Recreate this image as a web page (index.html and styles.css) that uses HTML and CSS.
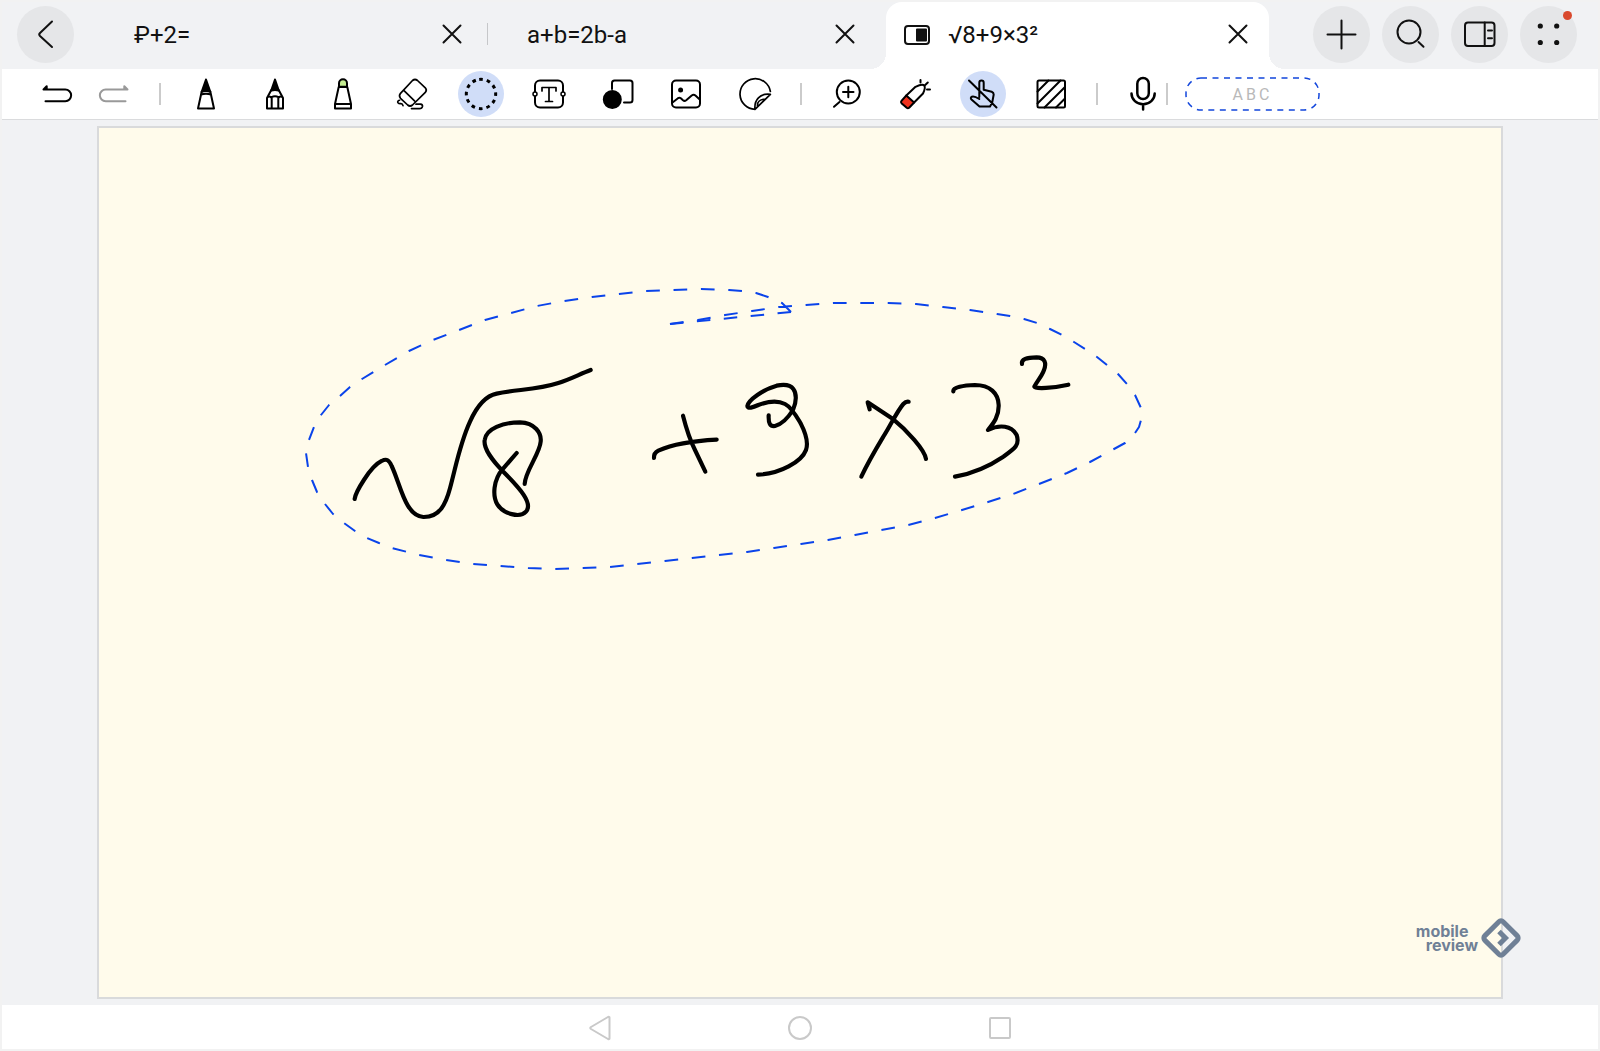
FILE: index.html
```html
<!DOCTYPE html>
<html lang="en">
<head>
<meta charset="utf-8">
<meta name="viewport" content="width=device-width, initial-scale=1">
<title>√8+9×3²</title>
<link rel="stylesheet" href="styles.css">
</head>
<body>
<div class="app">
  <header class="topbar">
    <button class="round-btn" type="button" aria-label="Back">
      <svg viewBox="0 0 57 57"><path d="M35 15.500L23 27q-1.500 1.500 0 3L35 41"/></svg>
    </button>
    <nav class="tabs" aria-label="Open notes">
      <div class="tab tab-divided">
        <button class="tab-title" type="button">₽+2=</button>
        <button class="tab-close" type="button" aria-label="Close ₽+2="><svg viewBox="0 0 32 32"><path d="M7.500 7.500l17 17M24.500 7.500l-17 17"/></svg></button>
      </div>
      <div class="tab">
        <button class="tab-title" type="button">a+b=2b-a</button>
        <button class="tab-close" type="button" aria-label="Close a+b=2b-a"><svg viewBox="0 0 32 32"><path d="M7.500 7.500l17 17M24.500 7.500l-17 17"/></svg></button>
      </div>
      <div class="tab tab-active">
        <button class="tab-title" type="button" aria-current="page">
          <svg class="split-icon" viewBox="0 0 26 20"><rect x="1" y="1" width="24" height="18" rx="3"/><rect class="solid" x="13" y="4.500" width="9" height="11"/></svg>
          <span>√8+9×3²</span>
        </button>
        <button class="tab-close" type="button" aria-label="Close √8+9×3²"><svg viewBox="0 0 32 32"><path d="M7.500 7.500l17 17M24.500 7.500l-17 17"/></svg></button>
      </div>
    </nav>
    <div class="actions">
      <button class="round-btn" type="button" aria-label="New note"><svg viewBox="0 0 57 57"><path d="M14.500 28.500h28M28.500 14.500v28"/></svg></button>
      <button class="round-btn" type="button" aria-label="Search"><svg viewBox="0 0 57 57"><circle cx="27" cy="26" r="11.500"/><path d="M36.500 36l5 4.700"/></svg></button>
      <button class="round-btn" type="button" aria-label="Side panel"><svg viewBox="0 0 57 57"><rect x="14" y="16.500" width="29.500" height="23.500" rx="3"/><path d="M33.700 16.500v23.500M37 24.500h4M37 32.300h4"/></svg></button>
      <button class="round-btn" type="button" aria-label="More">
        <svg viewBox="0 0 57 57"><g class="solid"><circle cx="20.300" cy="20" r="1.600"/><circle cx="36.700" cy="20" r="1.600"/><circle cx="20.300" cy="36.500" r="1.600"/><circle cx="36.700" cy="36.500" r="1.600"/></g></svg>
        <span class="badge"></span>
      </button>
    </div>
  </header>

  <div class="toolbar" role="toolbar" aria-label="Drawing tools">
    <div class="history">
      <button class="tool" type="button" aria-label="Undo"><svg viewBox="0 0 46 46"><path d="M12.700 15.200v3.300H9.500zM9.500 18.500h21.800a5.800 5.800 0 0 1 0 11.700H11.500"/></svg></button>
      <button class="tool tool-disabled" type="button" aria-label="Redo" disabled><svg viewBox="0 0 46 46"><path d="M33.300 15.200v3.300H36.500zM36.500 18.500H14.700a5.800 5.800 0 0 0 0 11.700H34.500"/></svg></button>
    </div>
    <span class="rule"></span>
    <div class="pens">
      <button class="tool" type="button" aria-label="Pen"><svg viewBox="0 0 46 46"><path class="solid" d="M23 8.500l-4.300 12.300q4.300-1.400 8.600 0z"/><path d="M18.700 20.500L15 37.500h16l-3.700-17M18 23.500q5-1.700 10 0"/></svg></button>
      <button class="tool" type="button" aria-label="Pencil"><svg viewBox="0 0 46 46"><path class="solid" d="M23 8.500l-3.800 11q3.800-1.200 7.600 0z"/><path d="M19.300 19L15 27v10.500h16V27l-4.300-8M15 27q2-2.500 4.200-.5 3.800-2.500 7.600 0Q29 24.500 31 27M19.700 27v10M26.300 27v10"/></svg></button>
      <button class="tool" type="button" aria-label="Highlighter"><svg viewBox="0 0 46 46"><path class="lime" d="M19 15.700v-3.400a4 4 0 0 1 8 0v3.400z"/><path d="M18.700 16h8.600L31 33v4.500H15V33zM15 33h16"/></svg></button>
      <button class="tool" type="button" aria-label="Eraser"><svg viewBox="0 0 46 46"><g class="fine"><path d="M23.500 9.500q2.500-2 5 0l7.800 7.300q2 2.300 0 4.600L23.500 34q-2.500 2-4.800 0l-7.200-6.700q-2-2.500 0-5zM14.500 19.200l11 10.600"/><path d="M10.500 29.300q-2.500.8-1.500 2.500 1 1.200 3 .8 1.500 0 2 2M27 33.200h4.500q2.200.3 2 2.200-.5 2.200-3 2.200H22.500"/></g></svg></button>
      <button class="tool tool-on" type="button" aria-label="Lasso" aria-pressed="true"><svg viewBox="0 0 46 46"><circle class="dots" cx="23" cy="23" r="14.700" transform="rotate(-97 23 23)"/></svg></button>
      <button class="tool" type="button" aria-label="Text"><svg viewBox="0 0 46 46"><rect x="9" y="9.500" width="28" height="27" rx="5"/><circle class="hole" cx="9" cy="23" r="2"/><circle class="hole" cx="37" cy="23" r="2"/><path class="fine" d="M16 20v-3.500h14V20M23 16.500v14M19.500 30.500h7"/></svg></button>
      <button class="tool" type="button" aria-label="Shapes"><svg viewBox="0 0 46 46"><path d="M17 18v-6a2.500 2.500 0 0 1 2.500-2.500H35a2.500 2.500 0 0 1 2.500 2.500v17a2.500 2.500 0 0 1-2.500 2.500h-6"/><circle class="solid" cx="17.300" cy="28.500" r="8.500"/></svg></button>
      <button class="tool" type="button" aria-label="Image"><svg viewBox="0 0 46 46"><rect x="9" y="9.500" width="28" height="27" rx="4"/><circle class="solid" cx="17.600" cy="19" r="1.500"/><path d="M9.500 31.500l5.500-4.300q1.500-1 2.800 0l2.200 2q1.500 1.300 3.200 0l5.500-4.700q2-1.500 4 .2l4.300 4"/></svg></button>
      <button class="tool" type="button" aria-label="Sticker"><svg viewBox="0 0 46 46"><g class="fine"><path d="M23 38.300A15.300 15.300 0 1 1 38.400 20.500M38.400 23.300L23 38.300C22 29 28 22 38.400 23.300zM25.500 35.500C25 30 28 28.500 33.500 28"/></g></svg></button>
    </div>
    <span class="rule"></span>
    <div class="helpers">
      <button class="tool" type="button" aria-label="Zoom in"><svg viewBox="0 0 46 46"><circle cx="24.300" cy="21" r="11.500"/><path d="M15.500 31l-5.500 4.800M24.300 15.800v10.400M19 21h10.500"/></svg></button>
      <button class="tool" type="button" aria-label="Laser pointer"><svg viewBox="0 0 46 46"><path class="red" d="M14.300 24.500l7.800 7-5 5.300q-1.200 1-2.400 0l-5.200-4.600q-1-1.200 0-2.400z"/><path d="M14.300 24.500l9.200-8.700q7-3.300 8.800-1.200 1.500 2-1.300 7.900l-8.900 9M28.500 9v2.500M33.200 14l2.600-2.500M35 18.500h3"/></svg></button>
      <button class="tool tool-on" type="button" aria-label="Disable finger drawing" aria-pressed="true"><svg viewBox="0 0 46 46"><path d="M19.300 26V11.700a2.200 2.200 0 0 1 4.400 0v7l8 2q2 .8 2 2.800l-1.500 8-2.200 4H19.500l-8.300-7.300q-1-1.700.7-2.500 2.500-.8 7.400 2.300M9 9.500l27.500 27"/></svg></button>
      <button class="tool" type="button" aria-label="Pattern"><svg viewBox="0 0 46 46"><rect x="9.500" y="9.500" width="27.500" height="27" rx="1.500"/><path d="M9.500 20.500l11-11M9.500 32.500l23-23M16.500 36.500L37 16M28 36.500l9-9"/></svg></button>
    </div>
    <span class="rule"></span>
    <button class="tool tool-mic" type="button" aria-label="Record"><svg viewBox="0 0 46 46"><rect x="17.300" y="7" width="11.500" height="21" rx="5.700"/><path d="M11.500 22.500a11.600 10.800 0 0 0 23.200 0M23.100 33.500v5"/></svg></button>
    <span class="rule rule-tight"></span>
    <button class="lasso-style" type="button">
      <svg viewBox="0 0 135 34" preserveAspectRatio="none"><rect x="1" y="1" width="133" height="32" rx="15"/></svg>
      <span>ABC</span>
    </button>
  </div>

  <main class="workspace">
    <div class="paper">
      <svg class="ink" viewBox="99 128 1402 869" role="img" aria-label="Handwritten √8 + 9 × 3², circled with the lasso">
        <polyline class="lasso" pathLength="145" points="670,324 698,320 725,315 752,311 779,307 806,305 834,303 861,303 888,303 916,304 943,307 970,310 997,314 1010,316 1024,319 1037,323 1050,329 1062,335 1074,342 1085,349 1097,357 1107,365 1118,374 1127,384 1135,395 1141,408 1142,414 1141,420 1139,427 1135,433 1125,443 1114,449 1090,462 1067,473 1039,484 1013,494 988,502 962,510 935,518 908,525 881,530 855,535 828,540 801,544 774,548 747,552 719,555 692,558 665,561 637,564 610,567 583,568 555,569 528,568 500,566 473,564 446,560 419,555 392,548 379,543 367,538 355,531 344,523 333,514 325,504 317,492 312,480 308,467 306,453 309,440 314,427 321,415 329,405 340,396 350,387 362,379 385,365 409,351 433,340 459,330 485,320 511,313 537,306 564,301 592,297 619,294 646,291 673,290 701,289 729,290 742,291 756,293 768,297 782,303 791,312"/>
        <path class="lasso" pathLength="9" d="M791 312L670 324"/>
        <g class="stroke" transform="translate(290 270) scale(.33333)">
          <path d="M194 687C196 668 240 590 275 573C290 565 297 570 305 588C332 645 345 737 400 741C450 742 468 700 480 655C500 580 510 520 540 455C560 410 585 378 620 371C680 358 740 360 805 339C840 328 870 312 902 300"/>
          <path d="M680 549L640 595C608 630 608 680 622 703C640 732 690 745 708 725C730 700 690 655 640 605C610 575 580 535 584 510C588 475 640 457 690 457C735 458 755 490 752 515C750 550 705 605 704 642"/>
        </g>
        <g class="stroke" transform="translate(610 270) scale(.33333)">
          <path d="M132 564Q131 549 145 542C190 522 240 513 320 509M219 437Q235 500 255 540L286 605"/>
          <path d="M476 436C475 460 480 470 495 468C515 463 535 442 549 420C560 395 560 370 550 357C540 343 520 343 500 347C460 358 415 390 412 408C412 418 430 412 445 405C480 392 505 392 525 402C545 412 560 440 572 460C590 495 595 520 588 540C575 575 510 612 444 614"/>
        </g>
        <g class="stroke" transform="translate(840 280) scale(.33333)">
          <path d="M89 388L83 367L160 418C200 450 255 510 258 537M206 365Q198 363 190 372C170 395 150 440 130 470C100 520 85 545 64 590"/>
          <path d="M340 334C338 322 370 316 405 315C450 315 475 340 476 375C477 410 460 430 444 450C480 432 515 437 530 465C540 495 525 505 490 530C450 557 400 580 345 590"/>
          <path d="M546 252C543 237 560 233 590 232C615 232 620 250 612 270C605 290 590 305 583 320C585 328 640 324 685 314"/>
        </g>
      </svg>
    </div>
    <div class="brand">
      <div class="brand-name">mobile<br><span>review</span></div>
      <svg viewBox="0 0 40 40"><rect x="7" y="7" width="26" height="26" rx="3" transform="rotate(45 20 20)"/><path d="M18 13.500l6.500 6.500-6.500 6.500"/></svg>
    </div>
  </main>

  <nav class="system-nav" aria-label="System">
    <button type="button" aria-label="Back"><svg viewBox="0 0 26 26"><path d="M22.500 2.500v21q0 1-1.500.5L4 14q-1.500-1 0-2L21 2q1.500-.5 1.500.5z"/></svg></button>
    <button type="button" aria-label="Home"><svg viewBox="0 0 26 26"><circle cx="13" cy="13" r="11"/></svg></button>
    <button type="button" aria-label="Recent apps"><svg viewBox="0 0 26 26"><rect x="3" y="3" width="20" height="20" rx="1"/></svg></button>
  </nav>
</div>
</body>
</html>
```
FILE: styles.css
```css
* {
  box-sizing: border-box;
}

body {
  margin: 0;
  background: #f2f2f2;
  color: #111;
  font-family: Roboto, "Liberation Sans", sans-serif;
}

button {
  margin: 0;
  padding: 0;
  border: 0;
  background: none;
  color: inherit;
  font: inherit;
}

svg {
  display: block;
  fill: none;
  stroke: currentColor;
  stroke-width: 2;
  stroke-linecap: round;
  stroke-linejoin: round;
}

.solid {
  fill: currentColor;
}

.app {
  display: flex;
  flex-direction: column;
  min-height: 100vh;
  padding: 2px;
}

/* Top bar */

.topbar {
  display: flex;
  align-items: stretch;
  padding: 0 21px 0 15px;
  background: #f1f2f4;
}

.round-btn {
  position: relative;
  width: 57px;
  height: 57px;
  margin: 4px 0 6px;
  border-radius: 50%;
  background: #e5e6e8;
}

.badge {
  position: absolute;
  top: 5px;
  right: 5px;
  width: 9px;
  height: 9px;
  border-radius: 50%;
  background: #d9482c;
}

.tabs {
  display: grid;
  flex: 1;
  grid-template-columns: repeat(3, minmax(0, 1fr));
  margin: 0 39px 0 21px;
}

.tab {
  position: relative;
  display: flex;
  align-items: center;
  padding: 0 20px 3px 39px;
  font-size: 24px;
  line-height: 32px;
}

.tab-divided::after {
  content: "";
  position: absolute;
  top: 21px;
  right: 0;
  width: 1px;
  height: 22px;
  background: #c6c7c9;
}

.tab-title {
  display: flex;
  flex: 1;
  align-items: center;
  gap: 18px;
  padding-top: 2px;
}

.tab-close {
  width: 32px;
  height: 32px;
}

.tab-active {
  margin: 0 5px;
  padding: 0 15px 3px 18px;
  border-radius: 16px 16px 0 0;
  background: #fff;
}

.tab-active::before,
.tab-active::after {
  content: "";
  position: absolute;
  bottom: 0;
  width: 16px;
  height: 16px;
}

.tab-active::before {
  right: 100%;
  background: radial-gradient(circle at 0 0, transparent 16px, #fff 16px);
}

.tab-active::after {
  left: 100%;
  background: radial-gradient(circle at 100% 0, transparent 16px, #fff 16px);
}

.split-icon {
  width: 26px;
  height: 20px;
}

.actions {
  display: flex;
  gap: 12px;
}

/* Toolbar */

.toolbar {
  display: flex;
  align-items: center;
  padding: 2px 0 2px 32px;
  border-bottom: 1px solid #dadbdd;
  background: #fff;
}

.history {
  display: flex;
  gap: 11px;
}

.pens,
.helpers {
  display: flex;
  justify-content: space-between;
}

.pens {
  width: 595px;
}

.helpers {
  width: 250px;
}

.tool {
  width: 46px;
  height: 46px;
  border-radius: 50%;
  color: #000;
}

.tool-on {
  background: #d0ddf8;
}

.tool-disabled {
  color: #999;
}

.tool-mic svg {
  stroke-width: 2.500;
}

.rule {
  width: 2px;
  height: 22px;
  margin: 0 22px;
  background: #cbcbcb;
}

.rule-tight {
  margin: 0 17px 0 0;
}

.fine {
  stroke-width: 1.700;
}

.lime {
  fill: #c5ee92;
}

.red {
  fill: #f0321e;
}

.hole {
  fill: #fff;
  stroke-width: 1.500;
}

.dots {
  stroke-width: 3;
  stroke-linecap: butt;
  stroke-dasharray: 3.600 4.097;
}

.lasso-style {
  position: relative;
  width: 135px;
  height: 34px;
  color: #b9b9b9;
  font-size: 16px;
  letter-spacing: 3px;
}

.lasso-style svg {
  position: absolute;
  inset: 0;
  width: 100%;
  height: 100%;
  stroke: #1246dc;
  stroke-width: 1.500;
  stroke-linecap: butt;
  stroke-dasharray: 6 5.500;
}

/* Page */

.workspace {
  position: relative;
  flex: 1;
  padding: 6px 95px;
  background: #f1f2f4;
}

.paper {
  border: 2px solid #d9dadb;
  background: #fffbeb;
}

.ink {
  width: 100%;
  height: auto;
}

.ink .lasso {
  stroke: #0a43ea;
  stroke-linecap: butt;
  stroke-dasharray: 1;
}

.ink .stroke {
  stroke: #000;
  stroke-width: 12.500;
}

.brand {
  position: absolute;
  right: 77px;
  bottom: 47px;
  display: flex;
  align-items: center;
  gap: 3px;
  color: #6f8096;
}

.brand-name {
  font-family: Inter, sans-serif;
  font-size: 16px;
  font-weight: 700;
  line-height: 14px;
}

.brand-name span {
  padding-left: 10px;
}

.brand svg {
  width: 40px;
  height: 40px;
  overflow: visible;
  stroke-width: 5;
  stroke-linecap: butt;
  stroke-linejoin: miter;
}

/* System navigation */

.system-nav {
  display: flex;
  justify-content: center;
  gap: 174px;
  padding: 10px 0 8px;
  background: #fff;
  color: #c9c9c9;
}

.system-nav button {
  width: 26px;
  height: 26px;
}
```
